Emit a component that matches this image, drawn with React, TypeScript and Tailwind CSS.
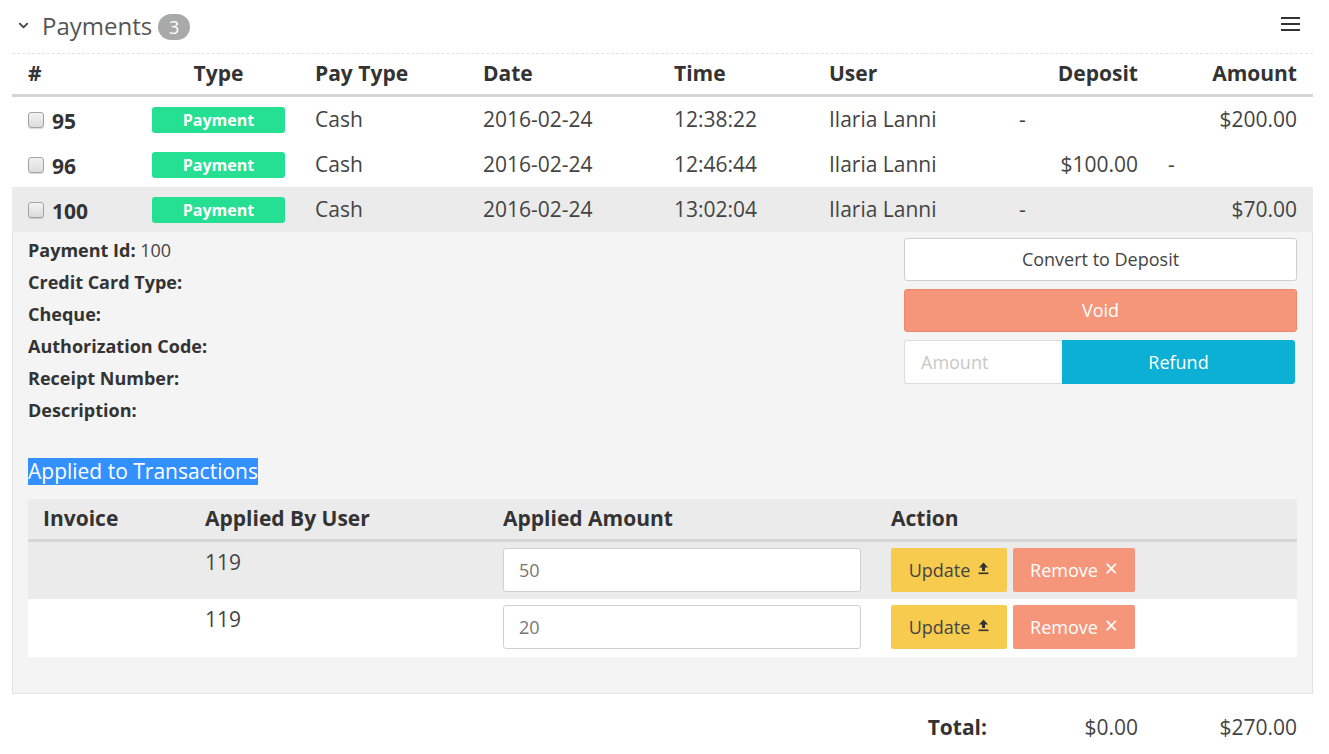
import { ChevronDown } from "lucide-react";

const cols = "grid grid-cols-[125px_163px_168px_191px_155px_190px_149px_160px]";
const subCols = "grid grid-cols-[162px_298px_388px_422px]";

const payments = [
  { id: "95", date: "2016-02-24", time: "12:38:22", user: "Ilaria Lanni", deposit: "-", amount: "$200.00" },
  { id: "96", date: "2016-02-24", time: "12:46:44", user: "Ilaria Lanni", deposit: "$100.00", amount: "-" },
  { id: "100", date: "2016-02-24", time: "13:02:04", user: "Ilaria Lanni", deposit: "-", amount: "$70.00", open: true },
];

const applied = [
  { user: "119", amount: "50", shaded: true },
  { user: "119", amount: "20", shaded: false },
];

function Checkbox() {
  return (
    <span className="inline-block w-4 h-4 rounded-[3px] border border-[#a3a3a3] bg-gradient-to-b from-[#f2f2f2] to-[#dcdcdc] shadow-[0_1px_1px_rgba(0,0,0,0.15)]" />
  );
}

function UploadIcon() {
  return (
    <svg width="11" height="13" viewBox="0 0 11 13" className="ml-2 mb-1">
      <path d="M5.5 0.5 L10 5.5 H7 V9 H4 V5.5 H1 Z" fill="#333" />
      <rect x="0.5" y="10.5" width="10" height="1.6" fill="#333" />
    </svg>
  );
}

function Cell({ value, right }: { value: string; right: number }) {
  if (value === "-") {
    return <div className="pl-[15px]">-</div>;
  }
  return <div className="text-right" style={{ paddingRight: right }}>{value}</div>;
}

export default function App() {
  return (
    <div className="w-[1329px] bg-white font-['Open_Sans',sans-serif] text-[#444]">
      {/* title bar */}
      <div className="flex items-center h-[53px] pl-[16px] pr-[29px]">
        <ChevronDown size={15} strokeWidth={3} className="text-[#444] mt-[-3px]" />
        <span className="ml-[11px] text-[24px] text-[#555] leading-none mt-[-2px]">Payments</span>
        <span className="ml-[6px] flex items-center justify-center w-[32px] h-[26px] rounded-full bg-[#a9a9a9] text-white text-[18px] leading-none">
          3
        </span>
        <div className="ml-auto flex flex-col gap-[4px] mt-[-6px]">
          <span className="block w-[19px] h-[2px] bg-[#333]" />
          <span className="block w-[19px] h-[2px] bg-[#333]" />
          <span className="block w-[19px] h-[2px] bg-[#333]" />
        </div>
      </div>

      <div className="ml-[12px] w-[1301px] border-t border-dashed border-[#e2e2e2]">
        {/* header */}
        <div className={`${cols} h-[43px] items-center border-b-[3px] border-[#d6d6d6] text-[21px] font-bold text-[#333]`}>
          <div className="pl-[16px]">#</div>
          <div className="text-center">Type</div>
          <div className="pl-[15px]">Pay Type</div>
          <div className="pl-[15px]">Date</div>
          <div className="pl-[15px]">Time</div>
          <div className="pl-[15px]">User</div>
          <div className="text-right pr-[15px]">Deposit</div>
          <div className="text-right pr-[16px]">Amount</div>
        </div>

        {payments.map((p) => (
          <div key={p.id}>
            <div className={`${cols} h-[45px] items-center text-[21px] ${p.open ? "bg-[#ebebeb]" : ""}`}>
              <div className="pl-[16px] flex items-center gap-[8px]">
                <Checkbox />
                <span className="font-bold text-[#333] mt-[5px]">{p.id}</span>
              </div>
              <div className="px-[15px]">
                <div className="h-[26px] rounded-[3px] bg-[#25df92] text-white text-[16px] font-bold flex items-center justify-center">
                  Payment
                </div>
              </div>
              <div className="pl-[15px]">Cash</div>
              <div className="pl-[15px]">{p.date}</div>
              <div className="pl-[15px]">{p.time}</div>
              <div className="pl-[15px]">{p.user}</div>
              <Cell value={p.deposit} right={15} />
              <Cell value={p.amount} right={16} />
            </div>

            {p.open && (
              <div className="bg-[#f4f4f4] border border-t-0 border-[#e3e3e3] px-[15px] pt-[2px] pb-[36px]">
                <div className="flex justify-between">
                  <div className="text-[18px] leading-[32px] text-[#333]">
                    <div>
                      <span className="font-bold">Payment Id:</span> <span className="text-[#444]">100</span>
                    </div>
                    <div className="font-bold">Credit Card Type:</div>
                    <div className="font-bold">Cheque:</div>
                    <div className="font-bold">Authorization Code:</div>
                    <div className="font-bold">Receipt Number:</div>
                    <div className="font-bold">Description:</div>
                  </div>
                  <div className="w-[393px] mt-[4px] flex flex-col gap-[8px] text-[18px]">
                    <button className="h-[43px] rounded-[3px] border border-[#cfcfcf] bg-white text-[#444]">
                      Convert to Deposit
                    </button>
                    <button className="h-[43px] rounded-[3px] border border-[#ee8a6c] bg-[#f5967a] text-white">
                      Void
                    </button>
                    <div className="flex h-[44px] pr-[2px]">
                      <div className="w-[158px] border border-[#dcdcdc] border-r-0 bg-white rounded-l-[3px] flex items-center pl-[16px] text-[#c8c8c8]">
                        Amount
                      </div>
                      <button className="flex-1 bg-[#0bb0d4] text-white rounded-r-[3px]">Refund</button>
                    </div>
                  </div>
                </div>

                <div className="mt-[32px]">
                  <span className="bg-[#3390ff] text-white text-[21px] leading-[27px] inline-block">
                    Applied to Transactions
                  </span>
                </div>

                <div className="mt-[14px] text-[21px]">
                  <div className={`${subCols} h-[43px] items-center bg-[#ebebeb] border-b-[3px] border-[#d6d6d6] font-bold text-[#333]`}>
                    <div className="pl-[15px]">Invoice</div>
                    <div className="pl-[15px]">Applied By User</div>
                    <div className="pl-[15px]">Applied Amount</div>
                    <div className="pl-[15px]">Action</div>
                  </div>
                  {applied.map((a, i) => (
                    <div
                      key={i}
                      className={`${subCols} items-start pt-[6px] ${i === 0 ? "h-[57px]" : "h-[58px]"} ${a.shaded ? "bg-[#ebebeb]" : "bg-white"}`}
                    >
                      <div />
                      <div className="pl-[15px] leading-[28px]">{a.user}</div>
                      <div className="pl-[15px] pr-[15px]">
                        <div className="h-[44px] rounded-[3px] border border-[#d0d0d0] bg-white flex items-center pl-[15px] text-[18px] text-[#777]">
                          {a.amount}
                        </div>
                      </div>
                      <div className="pl-[15px] flex gap-[6px] text-[18px]">
                        <button className="h-[44px] w-[116px] rounded-[2px] bg-[#f7cb4d] text-[#444] flex items-center justify-center">
                          Update
                          <UploadIcon />
                        </button>
                        <button className="h-[44px] w-[122px] rounded-[2px] bg-[#f5967a] text-white flex items-center justify-center">
                          Remove
                          <span className="ml-[7px] mb-[4px] text-[23px] leading-none">×</span>
                        </button>
                      </div>
                    </div>
                  ))}
                </div>
              </div>
            )}
          </div>
        ))}

        {/* totals */}
        <div className={`${cols} h-[68px] items-center text-[21px]`}>
          <div />
          <div />
          <div />
          <div />
          <div />
          <div className="text-right pr-[17px] font-bold text-[#333]">Total:</div>
          <div className="text-right pr-[15px]">$0.00</div>
          <div className="text-right pr-[16px]">$270.00</div>
        </div>
      </div>
    </div>
  );
}
